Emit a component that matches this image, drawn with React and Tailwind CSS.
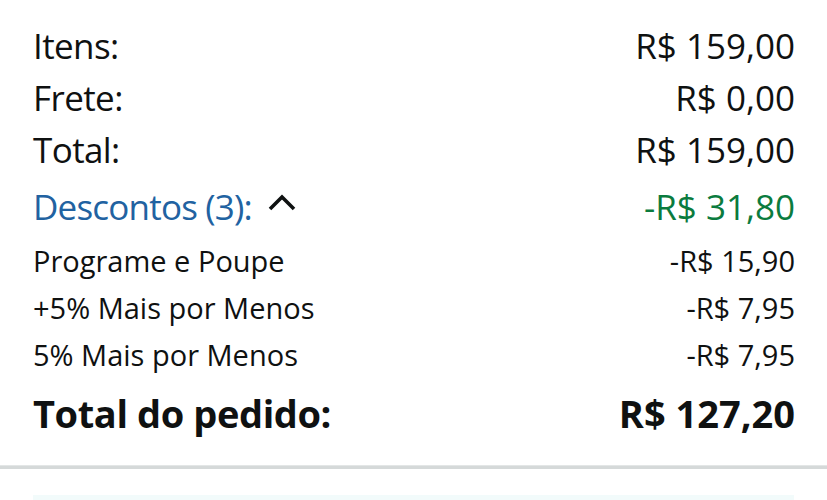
const SUMMARY = [
  { label: 'Itens:', value: 'R$ 159,00' },
  { label: 'Frete:', value: 'R$ 0,00' },
  { label: 'Total:', value: 'R$ 159,00' },
]

const DISCOUNTS = [
  { label: 'Programe e Poupe', value: '-R$ 15,90' },
  { label: '+5% Mais por Menos', value: '-R$ 7,95' },
  { label: '5% Mais por Menos', value: '-R$ 7,95' },
]

function Chevron() {
  return (
    <svg width="30" height="20" viewBox="0 0 30 20" className="ml-[15px] -mt-[10px]">
      <polyline points="3,17 15,5 27,17" fill="none" stroke="#0f1111" strokeWidth="3.6" />
    </svg>
  )
}

export default function App() {
  return (
    <div className="w-[827px] h-[500px] overflow-hidden bg-white text-[#0f1111] font-['Open_Sans',sans-serif]">
      <div className="pt-[20px] pl-[33px] pr-[32px]">
        {/* Summary rows */}
        {SUMMARY.map((row) => (
          <div key={row.label} className="flex justify-between h-[52px] leading-[52px] text-[35px]">
            <span className="tracking-[-0.6px]">{row.label}</span>
            <span>{row.value}</span>
          </div>
        ))}

        {/* Discounts header */}
        <div className="flex justify-between h-[52px] leading-[52px] text-[35px] mt-[5px]">
          <span className="flex items-center text-[#2162a1] tracking-[-0.8px]">
            Descontos (3):
            <Chevron />
          </span>
          <span className="text-[#0b7b3e]">-R$ 31,80</span>
        </div>

        {/* Discount lines */}
        <div className="mt-[4px]">
          {DISCOUNTS.map((row) => (
            <div key={row.label} className="flex justify-between h-[47px] leading-[47px] text-[29px]">
              <span>{row.label}</span>
              <span>{row.value}</span>
            </div>
          ))}
        </div>

        {/* Order total */}
        <div className="flex justify-between h-[52px] leading-[52px] text-[38px] font-bold mt-[9px]">
          <span className="tracking-[-0.4px]">Total do pedido:</span>
          <span>R$ 127,20</span>
        </div>
      </div>

      <div className="mt-[26px] h-[4px] bg-[#d5d9d9] border-t border-[#e3e6e6]" />
      <div className="mx-[33px] mt-[26px] h-[10px] bg-[#f2fbfb]" />
    </div>
  )
}
